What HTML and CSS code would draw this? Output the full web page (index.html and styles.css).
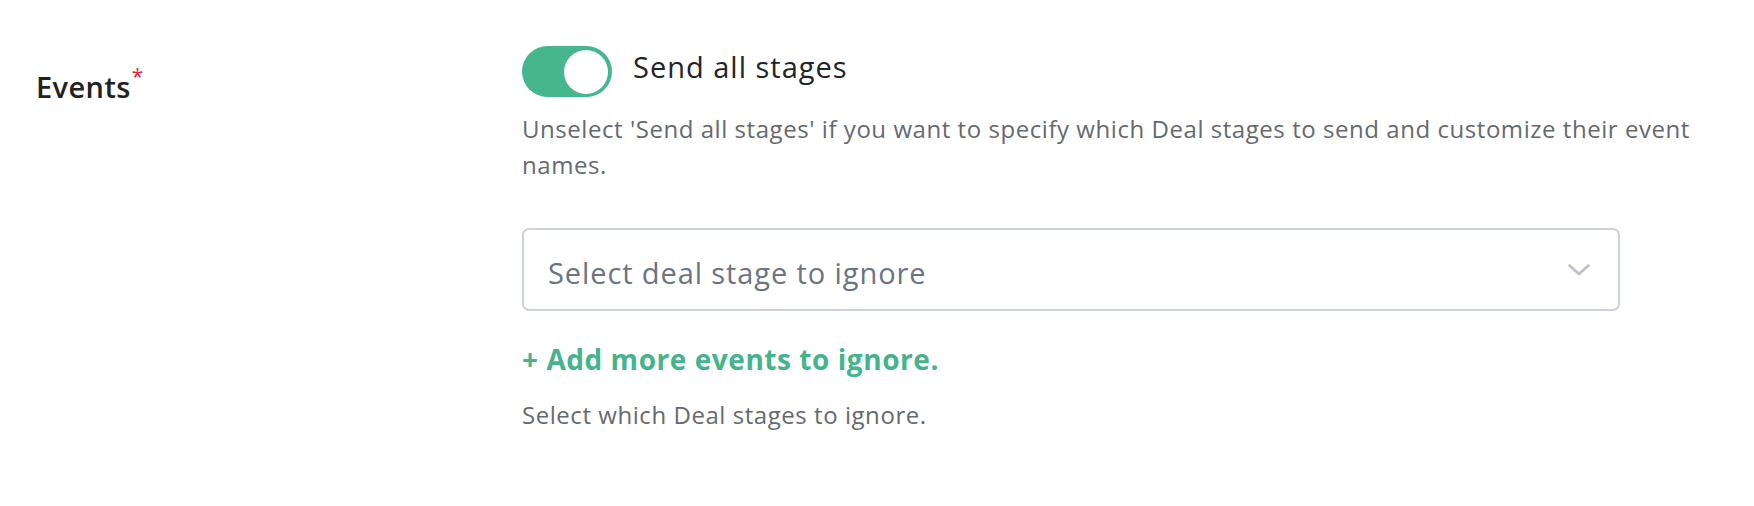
FILE: index.html
```html
<!DOCTYPE html>
<html lang="en">
<head>
    <meta charset="UTF-8">
    <meta name="viewport" content="width=device-width, initial-scale=1.0">
    <title>Events</title>
    <link rel="stylesheet" href="styles.css">
</head>
<body>

    <!-- Events field -->
    <div class="field-row">
        <div class="field-label">Events<span class="required">*</span></div>

        <div class="field-body">
            <!-- Send all stages toggle -->
            <div class="toggle-row">
                <div class="toggle is-on"><span class="toggle-knob"></span></div>
                <div class="toggle-text">Send all stages</div>
            </div>
            <p class="hint hint-top">Unselect 'Send all stages' if you want to specify which Deal stages to send and customize their event names.</p>

            <!-- Stage select -->
            <div class="select-box">
                <span class="select-placeholder">Select deal stage to ignore</span>
                <svg class="select-chevron" width="22" height="12" viewBox="0 0 22 12">
                    <path d="M1.5 1.5 L11 10 L20.5 1.5" fill="none" stroke="#bcc2ca" stroke-width="2.6" stroke-linecap="round" stroke-linejoin="round"/>
                </svg>
            </div>

            <div class="add-link">+ Add more events to ignore.</div>
            <p class="hint hint-bottom">Select which Deal stages to ignore.</p>
        </div>
    </div>

</body>
</html>
```

FILE: styles.css
```css
/* Page */
body {
    margin: 0;
    background: #fff;
    font-family: "Open Sans", "Noto Sans", Arial, sans-serif;
    color: #212529;
}

/* Field row: label column + control column */
.field-row {
    display: grid;
    grid-template-columns: 486px 1200px;
    padding: 46px 0 0 36px;
}
.field-label {
    font-size: 29px;
    font-weight: 600;
    letter-spacing: 0.4px;
    line-height: 36px;
    margin-top: 23px;
    color: #222;
}
.required {
    color: #e0283a;
    font-size: 21px;
    font-weight: 400;
    position: relative;
    top: -14px;
    margin-left: 1px;
}

/* Toggle */
.toggle-row {
    display: flex;
    align-items: flex-start;
    gap: 21px;
}
.toggle {
    width: 90px;
    height: 51px;
    border-radius: 26px;
    background-color: #45b68e;
    display: flex;
    align-items: center;
    justify-content: flex-end;
    padding: 0 4px;
    box-sizing: border-box;
}
.toggle-knob {
    width: 44px;
    height: 44px;
    border-radius: 50%;
    background: #fff;
}
.toggle-text {
    font-size: 29px;
    line-height: 36px;
    letter-spacing: 1px;
    margin-top: 3px;
    color: #212529;
}

/* Hints */
.hint {
    font-size: 24px;
    line-height: 36px;
    letter-spacing: 0.55px;
    color: #666a6e;
    margin: 0;
}
.hint-top {
    margin-top: 14px;
}
.hint-bottom {
    margin-top: 20px;
}

/* Select */
.select-box {
    width: 1098px;
    height: 83px;
    box-sizing: border-box;
    border: 2px solid #ccd2da;
    border-radius: 7px;
    margin-top: 45px;
    display: flex;
    align-items: center;
    justify-content: space-between;
    padding: 6px 28px 0 24px;
}
.select-placeholder {
    font-size: 29px;
    line-height: 36px;
    letter-spacing: 0.9px;
    color: #6b7480;
}
.select-chevron {
    margin-top: -6px;
}

/* Add link */
.add-link {
    margin-top: 30px;
    font-size: 28px;
    font-weight: 700;
    letter-spacing: 0.55px;
    line-height: 36px;
    color: #45b48c;
    cursor: pointer;
}
```
